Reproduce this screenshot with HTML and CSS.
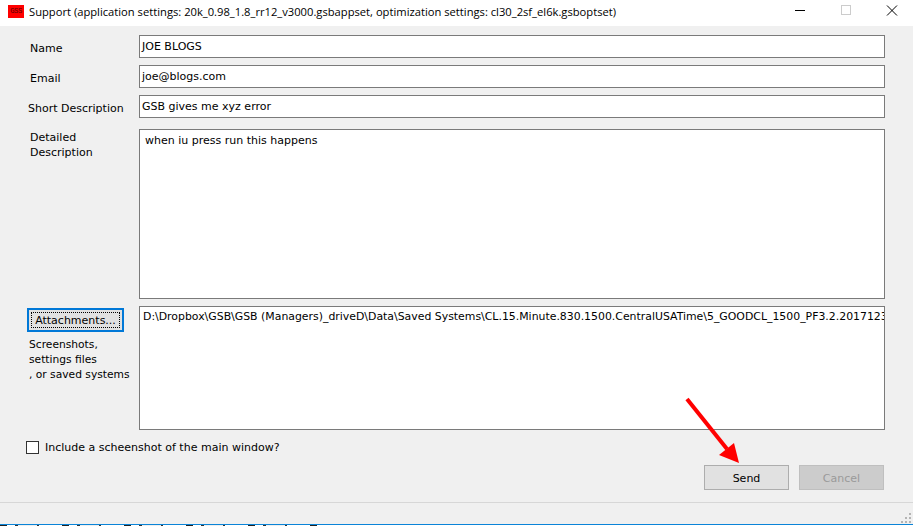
FILE: index.html
```html
<!DOCTYPE html>
<html lang="en">
<head>
<meta charset="utf-8">
<title>Support</title>
<link rel="stylesheet" href="styles.css">
</head>
<body>
<div class="window">
  <header class="titlebar">
    <span class="app-icon">GSS</span>
    <span class="title">Support (application settings: 20k_0.98_1.8_rr12_v3000.gsbappset, optimization settings: cl30_2sf_el6k.gsboptset)</span>
    <div class="win-controls">
      <svg class="win-btn" width="12" height="12" viewBox="0 0 12 12"><path d="M1 5.5H11" stroke="#000" fill="none"/></svg>
      <svg class="win-btn" width="12" height="12" viewBox="0 0 12 12"><rect x="1.5" y=".5" width="9" height="9" stroke="#ccc" fill="none"/></svg>
      <svg class="win-btn" width="12" height="12" viewBox="0 0 12 12"><path d="M1 0.5L11 10.5M11 .5L1 10.5" stroke="#000" fill="none"/></svg>
    </div>
  </header>
  <main class="form">
    <div class="row row-single">
      <label class="lbl lbl-a">Name</label>
      <div class="field">JOE BLOGS</div>
    </div>
    <div class="row row-single">
      <label class="lbl lbl-a">Email</label>
      <div class="field">joe@blogs.com</div>
    </div>
    <div class="row row-single">
      <label class="lbl lbl-b">Short Description</label>
      <div class="field">GSB gives me xyz error</div>
    </div>
    <div class="row row-detail">
      <label class="lbl lbl-a lbl-multi">Detailed<br>Description</label>
      <div class="field area area-detail">when iu press run this happens</div>
    </div>
    <div class="row row-attach">
      <div class="attach-side">
        <button class="btn-attach" type="button"><span class="focus-ring">Attachments...</span></button>
        <p class="hint">Screenshots,<br>settings files<br>, or saved systems</p>
      </div>
      <div class="field area area-attach">D:\Dropbox\GSB\GSB (Managers)_driveD\Data\Saved Systems\CL.15.Minute.830.1500.CentralUSATime\5_GOODCL_1500_PF3.2.20171231</div>
    </div>
    <div class="check-row">
      <span class="checkbox"></span>
      <span class="check-label">Include a scheenshot of the main window?</span>
    </div>
    <div class="actions">
      <button class="btn" type="button">Send</button>
      <button class="btn btn-disabled" type="button" disabled>Cancel</button>
    </div>
  </main>
  <footer class="statusbar">
    <svg class="grip" width="12" height="12" viewBox="0 0 12 12"><path d="M9 1h2v2H9zM5 5h2v2H5zM9 5h2v2H9zM1 9h2v2H1zM5 9h2v2H5zM9 9h2v2H9z" fill="#b4b4b4"/></svg>
  </footer>
  <div class="edge"></div>
</div>
<svg class="arrow" width="80" height="90" viewBox="0 0 80 90"><path d="M2 3L42 53" stroke="#f00" stroke-width="4" fill="none"/><path d="M54 67L49 47L34 59Z" fill="#f00"/></svg>
</body>
</html>
```
FILE: styles.css
```css
* { box-sizing: border-box; }
html, body { margin: 0; padding: 0; }
body {
  width: 913px;
  height: 526px;
  overflow: hidden;
  font-family: "DejaVu Sans", sans-serif;
  font-size: 11px;
  color: #000;
  background: #f0f0f0;
  position: relative;
}
.window { display: flex; flex-direction: column; height: 526px; }
.titlebar {
  height: 26px;
  flex: none;
  background: #fff;
  display: flex;
  align-items: center;
  padding-left: 8px;
}
.app-icon {
  width: 16px;
  height: 13px;
  margin-top: -3px;
  background: #f00;
  color: #500;
  font-family: "Liberation Mono", monospace;
  font-size: 7px;
  line-height: 13px;
  text-align: center;
  letter-spacing: -0.4px;
  overflow: hidden;
  flex: none;
}
.title { margin-left: 5px; font-family: "Open Sans", sans-serif; font-size: 11.2px; white-space: nowrap; margin-top: -3px; }
.win-controls { margin-left: auto; margin-top: -4px; display: flex; gap: 34px; padding-right: 15px; }
.form { flex: 1; position: relative; padding: 9px 28px 0 28px; }
.row { display: grid; grid-template-columns: 111px 746px; }
.row-single { height: 23px; margin-bottom: 7px; align-items: center; }
.row-detail { height: 170px; margin-top: 11px; }
.row-attach { height: 124px; margin-top: 7px; }
.lbl { white-space: nowrap; }
.lbl-a { padding-left: 2px; padding-top: 4px; }
.lbl-b { padding-top: 4px; }
.lbl-multi { padding-top: 1px; line-height: 15px; }
.field {
  background: #fff;
  border: 1px solid #7a7a7a;
  height: 23px;
  line-height: 20px;
  padding: 1px 0 0 2px;
  white-space: nowrap;
  overflow: hidden;
}
.area { height: auto; line-height: 18px; }
.area-detail { padding: 2px 0 0 5px; }
.area-attach { padding: 1px 0 0 3px; font-size: 10.9px; }
.attach-side { margin-left: -1px; padding-top: 2px; }
.btn-attach {
  display: block;
  width: 97px;
  height: 24px;
  padding: 2px;
  background: #e1e1e1;
  border: 2px solid #0078d7;
  font: inherit;
  color: #000;
}
.focus-ring {
  display: block;
  height: 16px;
  line-height: 15px;
  border: 1px dotted #000;
  white-space: nowrap;
}
.hint { margin: 5px 0 0 2px; line-height: 15px; white-space: nowrap; font-size: 10.7px; }
.check-row { display: flex; align-items: center; margin-top: 10px; height: 14px; margin-left: -2px; }
.checkbox { width: 13px; height: 13px; background: #fff; border: 1px solid #333; flex: none; }
.check-label { margin-left: 6px; white-space: nowrap; }
.actions { position: absolute; right: 29px; top: 439px; display: flex; gap: 10px; }
.btn {
  width: 85px;
  height: 25px;
  background: #e1e1e1;
  border: 1px solid #adadad;
  font: inherit;
  color: #000;
  padding: 2px 0 0;
}
.btn-disabled { background: #cccccc; border-color: #bfbfbf; color: #9a9a9a; }
.statusbar {
  height: 22px;
  flex: none;
  border-top: 1px solid #d7d7d7;
  position: relative;
}
.grip { position: absolute; right: 1px; bottom: 0; }
.edge {
  height: 2px;
  flex: none;
  background:
    linear-gradient(#0a84d8 0 1px, transparent 1px),
    repeating-linear-gradient(90deg, #222 0 7px, #fff 7px 15px, #333 15px 18px, #eee 18px 37px, #333 37px 39px, #fff 39px 62px) 0 0 / 322px 100% no-repeat,
    #fff;
}
.arrow { position: absolute; left: 685px; top: 396px; }
```
